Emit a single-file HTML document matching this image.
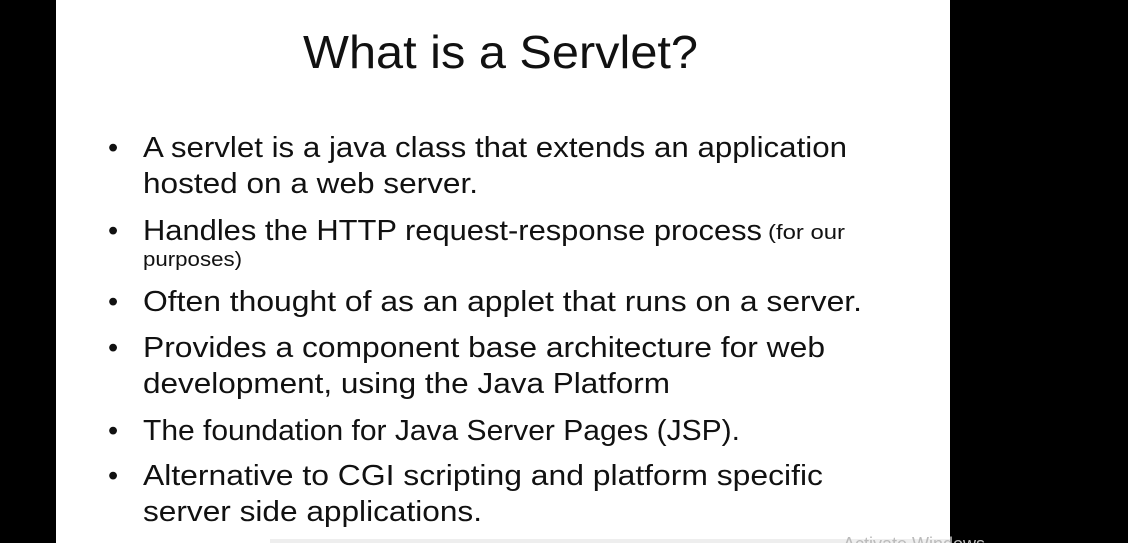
<!DOCTYPE html>
<html><head><style>
html,body{margin:0;padding:0;background:#000;width:1128px;height:543px;overflow:hidden}
svg{display:block}
text{font-family:"Liberation Sans",sans-serif;fill:#111}
</style></head><body>
<svg width="1128" height="543" xmlns="http://www.w3.org/2000/svg">
<rect x="0" y="0" width="1128" height="543" fill="#000"/>
<rect x="56" y="0" width="894" height="543" fill="#fff"/>
<text x="303" y="68" font-size="46" textLength="395" lengthAdjust="spacingAndGlyphs">What is a Servlet?</text>
<g font-size="29">
<text x="108" y="157">•</text>
<text x="143" y="157" textLength="704" lengthAdjust="spacingAndGlyphs">A servlet is a java class that extends an application</text>
<text x="143" y="193" textLength="335" lengthAdjust="spacingAndGlyphs">hosted on a web server.</text>
<text x="108" y="240">•</text>
<text x="143" y="240" textLength="619" lengthAdjust="spacingAndGlyphs">Handles the HTTP request-response process</text>
<text x="768" y="239" font-size="20" textLength="77" lengthAdjust="spacingAndGlyphs">(for our</text>
<text x="143" y="266" font-size="20" textLength="99" lengthAdjust="spacingAndGlyphs">purposes)</text>
<text x="108" y="311">•</text>
<text x="143" y="311" textLength="719" lengthAdjust="spacingAndGlyphs">Often thought of as an applet that runs on a server.</text>
<text x="108" y="357">•</text>
<text x="143" y="357" textLength="682" lengthAdjust="spacingAndGlyphs">Provides a component base architecture for web</text>
<text x="143" y="393" textLength="527" lengthAdjust="spacingAndGlyphs">development, using the Java Platform</text>
<text x="108" y="440">•</text>
<text x="143" y="440" textLength="597" lengthAdjust="spacingAndGlyphs">The foundation for Java Server Pages (JSP).</text>
<text x="108" y="485">•</text>
<text x="143" y="485" textLength="680" lengthAdjust="spacingAndGlyphs">Alternative to CGI scripting and platform specific</text>
<text x="143" y="521" textLength="339" lengthAdjust="spacingAndGlyphs">server side applications.</text>
</g>
<rect x="270" y="539" width="680" height="4" fill="#eee"/>
<text x="843" y="550" font-size="18" style="fill:#bbb">Activate Windows</text>
</svg>
</body></html>
